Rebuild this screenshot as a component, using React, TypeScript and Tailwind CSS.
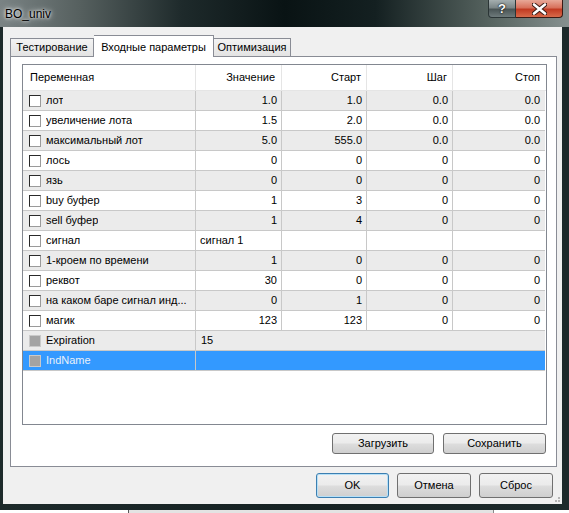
import React from 'react';

type Row = {
  name: string;
  value: string;
  start?: string;
  step?: string;
  stop?: string;
  text?: boolean; // value column left aligned
  span?: boolean; // value spans remaining columns
  disabled?: boolean;
  selected?: boolean;
};

const rows: Row[] = [
  { name: 'лот', value: '1.0', start: '1.0', step: '0.0', stop: '0.0' },
  { name: 'увеличение лота', value: '1.5', start: '2.0', step: '0.0', stop: '0.0' },
  { name: 'максимальный лот', value: '5.0', start: '555.0', step: '0.0', stop: '0.0' },
  { name: 'лось', value: '0', start: '0', step: '0', stop: '0' },
  { name: 'язь', value: '0', start: '0', step: '0', stop: '0' },
  { name: 'buy буфер', value: '1', start: '3', step: '0', stop: '0' },
  { name: 'sell буфер', value: '1', start: '4', step: '0', stop: '0' },
  { name: 'сигнал', value: 'сигнал 1', start: '', step: '', stop: '', text: true },
  { name: '1-кроем по времени', value: '1', start: '0', step: '0', stop: '0' },
  { name: 'реквот', value: '30', start: '0', step: '0', stop: '0' },
  { name: 'на каком баре сигнал инд...', value: '0', start: '1', step: '0', stop: '0' },
  { name: 'магик', value: '123', start: '123', step: '0', stop: '0' },
  { name: 'Expiration', value: '15', span: true, disabled: true },
  { name: 'IndName', value: '', span: true, disabled: true, selected: true },
];

const btn =
  'flex items-center justify-center rounded-[3px] border bg-[linear-gradient(to_bottom,#f2f2f2_0%,#ebebeb_48%,#dddddd_52%,#cfcfcf_100%)] text-[11px] text-black';

function Checkbox({ disabled }: { disabled?: boolean }) {
  if (disabled) {
    return <div className="h-[12px] w-[12px] shrink-0 border border-[#c9c9c9] bg-[#a3a3a3]" />;
  }
  return (
    <div className="h-[12px] w-[12px] shrink-0 border border-b-[#9a9a9a] border-l-[#2a2a2a] border-r-[#9a9a9a] border-t-[#2a2a2a] bg-white" />
  );
}

function TableRow({ row, index }: { row: Row; index: number }) {
  const bg = row.selected ? 'bg-[#3399ff]' : index % 2 === 0 ? 'bg-[#ebebeb]' : 'bg-white';
  const color = row.selected ? 'text-[#e8f0fa]' : 'text-black';
  const cell = 'flex h-full items-center border-r border-[#c8c8c8] px-[4px]';
  return (
    <div className={`flex h-[20px] border-b border-[#c8c8c8] ${bg} ${color}`}>
      <div className={`${cell} w-[173px] gap-[5px] pl-[6px]`}>
        <Checkbox disabled={row.disabled} />
        <span className="truncate">{row.name}</span>
      </div>
      {row.span ? (
        <div className="flex h-full flex-1 items-center px-[5px]">{row.value}</div>
      ) : (
        <>
          <div className={`${cell} w-[86px] ${row.text ? 'justify-start' : 'justify-end'}`}>{row.value}</div>
          <div className={`${cell} w-[85px] justify-end`}>{row.start}</div>
          <div className={`${cell} w-[86px] justify-end`}>{row.step}</div>
          <div className="flex h-full flex-1 items-center justify-end px-[5px]">{row.stop}</div>
        </>
      )}
    </div>
  );
}

export default function App() {
  return (
    <div className="flex h-[513px] w-[569px] flex-col overflow-hidden bg-white font-['Liberation_Sans',Arial,sans-serif] text-[11px]">
      {/* window frame */}
      <div className="flex h-[510px] flex-col bg-[linear-gradient(to_right,#1d2a2b_0%,#162223_50%,#1d2a2b_100%)]">
        {/* title bar */}
        <div className="flex h-[27px] shrink-0 justify-between bg-[linear-gradient(to_right,#7a8384_0%,#56605f_14%,#1e2a2b_32%,#091314_50%,#142021_66%,#56635f_86%,#86908f_100%)]">
          <div className="flex items-center pl-[5px] text-[12px] text-black [text-shadow:0_0_6px_#ffffff,0_0_3px_#ffffff]">
            BO_univ
          </div>
          <div className="mr-[6px] flex self-start">
            <div className="flex h-[18px] w-[28px] items-center justify-center rounded-bl-[4px] border border-t-0 border-[#2b3536] bg-[linear-gradient(to_bottom,#a4aeaf_0%,#7b8687_45%,#4a5556_55%,#6e7a7b_100%)] text-[13px] font-bold text-white [text-shadow:0_0_2px_#000,0_0_1px_#000]">
              ?
            </div>
            <div className="flex h-[18px] w-[47px] items-center justify-center rounded-br-[4px] border border-l-0 border-t-0 border-[#3a1a14] bg-[linear-gradient(to_bottom,#e8a898_0%,#d8715c_45%,#c13a22_55%,#d86a4a_100%)]">
              <svg width="15" height="12" viewBox="0 0 15 12">
                <path d="M2 1.5 L13 10.5 M13 1.5 L2 10.5" stroke="#3a1a14" strokeWidth="4.5" strokeLinecap="round" />
                <path d="M2 1.5 L13 10.5 M13 1.5 L2 10.5" stroke="#ffffff" strokeWidth="2.6" strokeLinecap="round" />
              </svg>
            </div>
          </div>
        </div>

        {/* client area */}
        <div className="ml-[3px] mr-[7px] flex flex-1 flex-col bg-[#f0f0f0] pl-[7px] pr-[5px] pt-[8px]">
          {/* tabs */}
          <div className="relative z-10 flex h-[21px] items-end">
            <div className="flex h-[18px] w-[84px] items-center justify-center border border-b-0 border-[#898c95] bg-[linear-gradient(to_bottom,#f3f3f3,#e3e3e3)]">
              Тестирование
            </div>
            <div className="-mb-px flex h-[22px] w-[120px] items-start justify-center border border-b-0 border-l-0 border-[#898c95] bg-white pt-[3px]">
              Входные параметры
            </div>
            <div className="flex h-[18px] w-[77px] items-center justify-center border border-b-0 border-l-0 border-[#898c95] bg-[linear-gradient(to_bottom,#f3f3f3,#e3e3e3)]">
              Оптимизация
            </div>
          </div>

          {/* tab panel */}
          <div className="flex h-[411px] w-[547px] flex-col border border-[#898c95] bg-white pl-[11px] pt-[7px]">
            {/* list grid */}
            <div className="flex h-[361px] w-[525px] flex-col border border-[#828790] bg-white">
              <div className="flex h-[26px] shrink-0 border-b border-[#e5e5e5] text-black">
                <div className="flex w-[173px] items-center border-r border-[#e5e5e5] pl-[7px]">Переменная</div>
                <div className="flex w-[86px] items-center justify-end border-r border-[#e5e5e5] pr-[6px]">Значение</div>
                <div className="flex w-[85px] items-center justify-end border-r border-[#e5e5e5] pr-[5px]">Старт</div>
                <div className="flex w-[86px] items-center justify-end border-r border-[#e5e5e5] pr-[5px]">Шаг</div>
                <div className="flex flex-1 items-center justify-end pr-[6px]">Стоп</div>
              </div>
              <div className="flex flex-col pr-px">
                {rows.map((r, i) => (
                  <TableRow key={r.name} row={r} index={i} />
                ))}
              </div>
            </div>

            <div className="mt-[8px] flex justify-end gap-[9px] pr-[10px]">
              <button className={`${btn} h-[21px] w-[102px] border-[#707070]`}>Загрузить</button>
              <button className={`${btn} h-[21px] w-[103px] border-[#707070]`}>Сохранить</button>
            </div>
          </div>

          {/* dialog buttons */}
          <div className="relative mt-[6px] flex justify-end gap-[8px] pr-[4px]">
            <button className={`${btn} h-[25px] w-[73px] border-[#3c7fb1] shadow-[inset_0_0_0_1px_#b6e0f7]`}>OK</button>
            <button className={`${btn} h-[25px] w-[74px] border-[#707070]`}>Отмена</button>
            <button className={`${btn} h-[25px] w-[74px] border-[#707070]`}>Сброс</button>
            <div className="absolute bottom-[-4px] right-[-3px] grid grid-cols-3 gap-[1px]">
              <span />
              <span />
              <span className="h-[2px] w-[2px] bg-[#b5b5b5]" />
              <span />
              <span className="h-[2px] w-[2px] bg-[#b5b5b5]" />
              <span className="h-[2px] w-[2px] bg-[#b5b5b5]" />
            </div>
          </div>
        </div>
        <div className="h-[6px] shrink-0" />
      </div>

      {/* window underneath */}
      <div className="flex h-[3px]">
        <div className="w-[128px] bg-white" />
        <div className="w-px bg-[#555]" />
        <div className="w-[364px] bg-[#e3e3e3]" />
        <div className="w-px bg-[#888]" />
        <div className="flex-1 bg-white" />
      </div>
    </div>
  );
}
